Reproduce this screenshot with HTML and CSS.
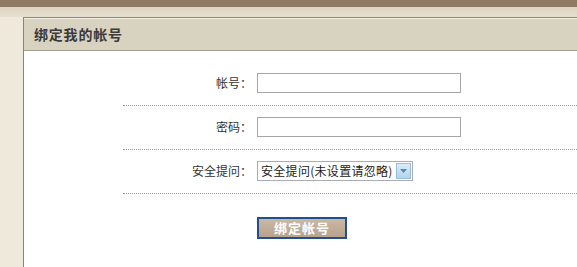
FILE: index.html
```html
<!DOCTYPE html>
<html lang="zh-CN">
<head>
<meta charset="utf-8">
<title>绑定我的帐号</title>
<link rel="stylesheet" href="styles.css">
</head>
<body>
<div class="topbar"></div>
<div class="page">
  <div class="panel">
    <div class="panel-head"><h2 class="title">绑定我的帐号</h2></div>
    <form class="form">
      <div class="row">
        <label class="lbl" for="acc">帐号：</label>
        <input class="txt" id="acc" type="text">
      </div>
      <div class="row">
        <label class="lbl" for="pwd">密码：</label>
        <input class="txt" id="pwd" type="password">
      </div>
      <div class="row">
        <label class="lbl" for="q">安全提问：</label>
        <span class="sel-wrap">
          <select class="sel" id="q">
            <option>安全提问(未设置请忽略)</option>
          </select>
          <span class="sel-arrow"><svg width="7" height="4" viewBox="0 0 7 4"><path d="M0 0H7L3.5 4Z" fill="#3f95ad"/></svg></span>
        </span>
      </div>
      <div class="actions">
        <button class="btn" type="button">绑定帐号</button>
      </div>
    </form>
  </div>
</div>
</body>
</html>
```
FILE: styles.css
```css
html, body {
  margin: 0;
  padding: 0;
  height: 100%;
}
body {
  background: #efe9dc;
  font-family: "Noto Sans CJK SC", "Liberation Sans", sans-serif;
  font-size: 12px;
  color: #333;
  overflow: hidden;
}
.topbar {
  height: 7px;
  background: #8f7b63;
}
.page {
  padding: 10px 0 0 23px;
  background: linear-gradient(#ddd4c2, #e6dfcf 10px, #efe9dc 10px);
  height: calc(100% - 17px);
}
.panel {
  background: #fff;
  border-left: 1px solid #8a8571;
  border-top: 1px solid #8f8a78;
  height: 100%;
}
.panel-head {
  height: 32px;
  background: #d8d2c0;
  box-shadow: inset 0 1px 0 #f2eee2;
  border-bottom: 1px solid #a39d8b;
  display: flex;
  align-items: center;
  padding-left: 10px;
}
.title {
  margin: 0;
  font-size: 14px;
  font-weight: bold;
  color: #3a3a3a;
  letter-spacing: 0.8px;
}
.form {
  margin: 0 0 0 99px;
  padding-top: 11px;
}
.row {
  display: flex;
  align-items: center;
  gap: 5px;
  padding: 11px 0 12px;
  border-bottom: 1px dotted #9a9a9a;
}
.lbl {
  width: 129px;
  text-align: right;
  line-height: 20px;
  color: #333;
}
.txt {
  box-sizing: border-box;
  width: 204px;
  height: 20px;
  margin: 0;
  border: 1px solid #a6a6a6;
  background: #fff;
  padding: 0 3px;
}
.sel-wrap {
  position: relative;
  display: block;
  width: 156px;
  height: 20px;
}
.sel {
  appearance: none;
  -webkit-appearance: none;
  box-sizing: border-box;
  width: 156px;
  height: 20px;
  margin: 0;
  border: 1px solid #a9adb3;
  background: #fff;
  padding: 0 0 0 3px;
  font-family: "Noto Sans CJK SC", sans-serif;
  font-size: 12px;
  color: #222;
  line-height: 18px;
  letter-spacing: 0.3px;
}
.sel-arrow {
  position: absolute;
  right: 2px;
  top: 2px;
  box-sizing: border-box;
  width: 15px;
  height: 16px;
  border: 1px solid #98bcdc;
  background: linear-gradient(#dcebf8, #b4d3ee);
  display: flex;
  align-items: center;
  justify-content: center;
  pointer-events: none;
}
.actions {
  padding: 23px 0 0 134px;
}
.btn {
  box-sizing: border-box;
  width: 90px;
  height: 22px;
  margin: 0;
  padding: 0;
  border: 2px solid #22508c;
  background: linear-gradient(#c8b8a5, #b7a38d);
  color: #fff;
  font-family: "Noto Sans CJK SC", sans-serif;
  font-size: 13px;
  font-weight: bold;
  line-height: 18px;
  letter-spacing: 1px;
}
```
